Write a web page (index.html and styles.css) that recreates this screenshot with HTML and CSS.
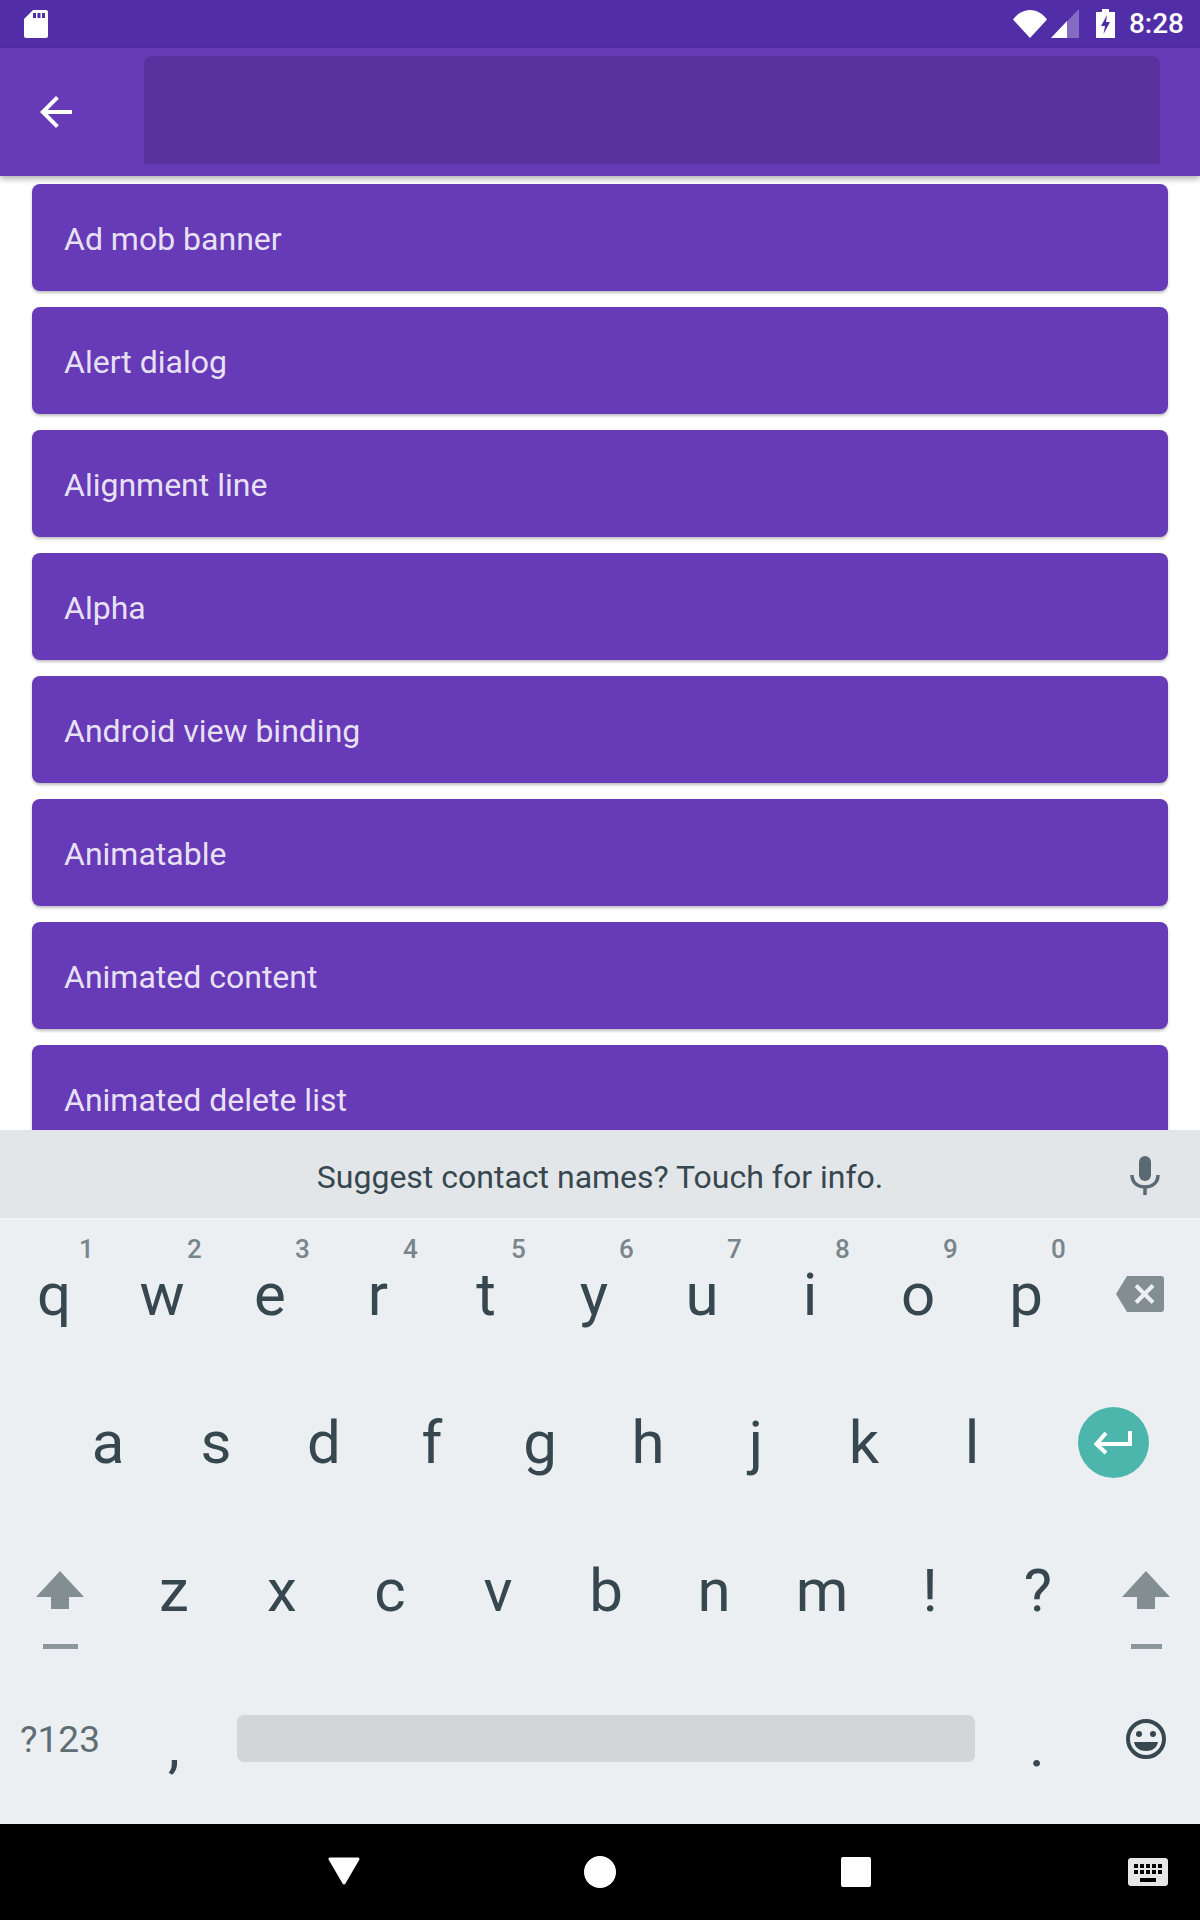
FILE: index.html
```html
<!DOCTYPE html>
<html lang="en">
<head>
<meta charset="utf-8">
<title>Compose examples</title>
<link rel="stylesheet" href="styles.css">
</head>
<body>
<div class="screen">
  <header class="status">
    <svg class="ic-sd" width="24" height="28" viewBox="0 0 24 28"><path fill="#fff" fill-rule="evenodd" d="M9 0H22a2 2 0 0 1 2 2V26a2 2 0 0 1-2 2H2a2 2 0 0 1-2-2V9ZM9 3V8H12V3ZM13.500 3V8H16.500V3ZM18 3V8H21V3Z"/></svg>
    <div class="status-right">
      <svg class="ic-wifi" width="34" height="28" viewBox="0 0 34 28"><path fill="#fff" d="M17 28L0 9.500C4 4 10 0 17 0S30 4 34 9.500Z"/></svg>
      <svg class="ic-signal" width="28" height="29" viewBox="0 0 28 29"><path fill="#fff" fill-opacity=".3" d="M28 0V29H0Z"/><path fill="#fff" d="M16 12V29H0Z"/></svg>
      <svg class="ic-batt" width="19" height="29" viewBox="0 0 19 29"><path fill="#fff" d="M6 0H13V3H19V29H0V3H6Z"/><path fill="#512da8" d="M11 6L5 17H9L7.500 25L14 13H10Z"/></svg>
      <span class="clock">8:28</span>
    </div>
  </header>
  <div class="toolbar">
    <svg class="ic-back" width="48" height="48" viewBox="0 0 24 24"><path fill="#fff" d="M20 11H7.830l5.590-5.590L12 4l-8 8 8 8 1.410-1.410L7.830 13H20v-2z"/></svg>
    <div class="search"></div>
  </div>
  <main class="list">
    <div class="card">Ad mob banner</div>
    <div class="card">Alert dialog</div>
    <div class="card">Alignment line</div>
    <div class="card">Alpha</div>
    <div class="card">Android view binding</div>
    <div class="card">Animatable</div>
    <div class="card">Animated content</div>
    <div class="card">Animated delete list</div>
  </main>
  <section class="keyboard">
    <div class="suggest">
      <span>Suggest contact names? Touch for info.</span>
      <svg class="ic-mic" width="30" height="40" viewBox="0 0 30 40"><rect x="9" y="1" width="12" height="25" rx="6" fill="#5b6a72"/><path fill="none" stroke="#5b6a72" stroke-width="3.500" d="M2 20C2 28 8 32 15 32S28 28 28 20M15 32V40"/></svg>
    </div>
    <div class="row">
      <div class="key">q<sup class="hint">1</sup></div>
      <div class="key">w<sup class="hint">2</sup></div>
      <div class="key">e<sup class="hint">3</sup></div>
      <div class="key">r<sup class="hint">4</sup></div>
      <div class="key">t<sup class="hint">5</sup></div>
      <div class="key">y<sup class="hint">6</sup></div>
      <div class="key">u<sup class="hint">7</sup></div>
      <div class="key">i<sup class="hint">8</sup></div>
      <div class="key">o<sup class="hint">9</sup></div>
      <div class="key">p<sup class="hint">0</sup></div>
      <div class="key key-fill">
        <svg class="ic-del" width="48" height="36" viewBox="0 0 48 36"><path fill="#828e92" d="M11 0H45a3 3 0 0 1 3 3V33a3 3 0 0 1-3 3H11L0 18Z"/><path stroke="#eceff1" stroke-width="4" d="M20 9.500L37 26.500M37 9.500L20 26.500"/></svg>
      </div>
    </div>
    <div class="row row-home">
      <div class="key">a</div>
      <div class="key">s</div>
      <div class="key">d</div>
      <div class="key">f</div>
      <div class="key">g</div>
      <div class="key">h</div>
      <div class="key">j</div>
      <div class="key">k</div>
      <div class="key">l</div>
      <div class="key key-fill">
        <div class="enter">
          <svg width="38" height="24" viewBox="0 0 38 24"><path fill="none" stroke="#fff" stroke-width="4" d="M36 0V13H3M12 2L2.500 13L12 22"/></svg>
        </div>
      </div>
    </div>
    <div class="row">
      <div class="key key-shift">
        <svg width="48" height="84" viewBox="0 0 48 84"><path fill="#828e92" d="M24 0L48 26H33V38H15V26H0Z"/><rect x="7" y="73" width="35" height="5" fill="#8c979c"/></svg>
      </div>
      <div class="key">z</div>
      <div class="key">x</div>
      <div class="key">c</div>
      <div class="key">v</div>
      <div class="key">b</div>
      <div class="key">n</div>
      <div class="key">m</div>
      <div class="key">!</div>
      <div class="key">?</div>
      <div class="key key-fill key-shift">
        <svg width="48" height="84" viewBox="0 0 48 84"><path fill="#828e92" d="M24 0L48 26H33V38H15V26H0Z"/><rect x="9" y="73" width="31" height="5" fill="#8c979c"/></svg>
      </div>
    </div>
    <div class="row row-bottom">
      <div class="key key-shift key-sym">?123</div>
      <div class="key key-punct">,</div>
      <div class="space"></div>
      <div class="key key-punct key-period">.</div>
      <div class="key key-fill key-emoji">
        <svg width="40" height="40" viewBox="0 0 40 40"><circle cx="20" cy="20" r="18" fill="none" stroke="#37474f" stroke-width="4"/><circle cx="13" cy="15" r="3" fill="#37474f"/><circle cx="27" cy="15" r="3" fill="#37474f"/><path fill="#37474f" d="M8 23H32C31 29 26 32 20 32S9 29 8 23Z"/></svg>
      </div>
    </div>
  </section>
  <nav class="nav">
    <svg class="nav-back" width="32" height="28" viewBox="0 0 32 28"><path fill="#fff" stroke="#fff" stroke-width="3" stroke-linejoin="round" d="M2 2H30L16 26Z"/></svg>
    <span class="nav-home"></span>
    <span class="nav-recent"></span>
    <svg class="nav-kbd" width="40" height="28" viewBox="0 0 40 28"><rect width="40" height="28" rx="3" fill="#e6e6e6"/><g fill="#000"><rect x="6" y="6" width="4" height="4"/><rect x="12" y="6" width="4" height="4"/><rect x="18" y="6" width="4" height="4"/><rect x="24" y="6" width="4" height="4"/><rect x="30" y="6" width="4" height="4"/><rect x="6" y="12" width="4" height="4"/><rect x="12" y="12" width="4" height="4"/><rect x="18" y="12" width="4" height="4"/><rect x="24" y="12" width="4" height="4"/><rect x="30" y="12" width="4" height="4"/><rect x="12" y="20" width="16" height="4"/></g></svg>
  </nav>
</div>
</body>
</html>
```
FILE: styles.css
```css
* { box-sizing: border-box; }
html, body { margin: 0; padding: 0; }
body { background: #fff; font-family: Roboto, "Noto Sans", sans-serif; }
.screen { width: 1200px; height: 1920px; display: flex; flex-direction: column; overflow: hidden; }

.status { height: 48px; flex: none; background: #512da8; display: flex; align-items: flex-start; padding: 10px 16px 0 24px; color: #fff; }
.status-right { margin-left: auto; display: flex; align-items: flex-start; }
.ic-signal { margin-left: 4px; margin-top: -1px; }
.ic-batt { margin-left: 17px; margin-top: -1px; }
.clock { margin-left: 14px; font-size: 28px; line-height: 28px; font-weight: 500; }

.toolbar { height: 128px; flex: none; background: #673ab7; display: flex; align-items: flex-start; padding: 8px 40px 0 32px; box-shadow: 0 3px 6px rgba(0,0,0,.3); position: relative; z-index: 1; }
.ic-back { margin-top: 32px; }
.search { margin-left: 64px; width: 1016px; height: 108px; background: rgba(0,0,0,.13); border-radius: 8px 8px 0 0; }

.list { flex: 1; min-height: 0; overflow: hidden; padding: 8px 32px 0; display: flex; flex-direction: column; gap: 16px; }
.card { flex: none; height: 107px; background: #673ab7; border-radius: 8px; padding: 4px 0 0 32px; color: rgba(255,255,255,.87); font-size: 32px; line-height: 103px; box-shadow: 0 2px 3px rgba(0,0,0,.25); }

.keyboard { flex: none; height: 694px; background: #eceff1; color: #37474f; }
.suggest { height: 90px; padding-top: 5px; background: #e3e6e9; border-bottom: 2px solid #f1f3f5; display: flex; align-items: center; justify-content: center; font-size: 32px; position: relative; }
.ic-mic { position: absolute; left: 1130px; top: 25px; }

.row { display: flex; height: 148px; }
.row-home { padding-left: 54px; }
.row-bottom { height: 160px; }
.key { position: relative; flex: none; width: 108px; height: 148px; padding-top: 2px; display: flex; justify-content: center; align-items: center; font-size: 60px; line-height: 146px; }
.key-fill { flex: 1; width: auto; }
.key-shift { width: 120px; }
.row .key-fill.key-shift { width: auto; }
.hint { position: absolute; top: 16px; left: calc(50% + 25px); font-size: 26px; line-height: 26px; font-weight: 500; color: #78868c; vertical-align: baseline; }
.ic-del { margin-top: -2px; }
.enter { width: 71px; height: 71px; border-radius: 50%; background: #4db6ac; display: flex; align-items: center; justify-content: center; margin-top: -1px; }
.key-shift svg { margin-top: 44px; }
.key-sym { font-size: 37px; line-height: 155px; color: #5f6d74; }
.key-punct { font-size: 60px; line-height: 153px; height: 160px; }
.key-period { margin-left: 8px; }
.space { flex: none; margin: 51px 0 0 9px; width: 738px; height: 47px; background: #d2d6d9; border-radius: 7px; }

.nav { height: 96px; flex: none; background: #000; display: flex; align-items: flex-start; padding: 33px 0 0 328px; }
.nav-home { margin: -1px 0 0 224px; width: 32px; height: 32px; border-radius: 50%; background: #fff; }
.nav-recent { margin: 0 0 0 225px; width: 30px; height: 30px; border-radius: 2px; background: #fff; }
.nav-kbd { margin: 1px 0 0 257px; }
```
